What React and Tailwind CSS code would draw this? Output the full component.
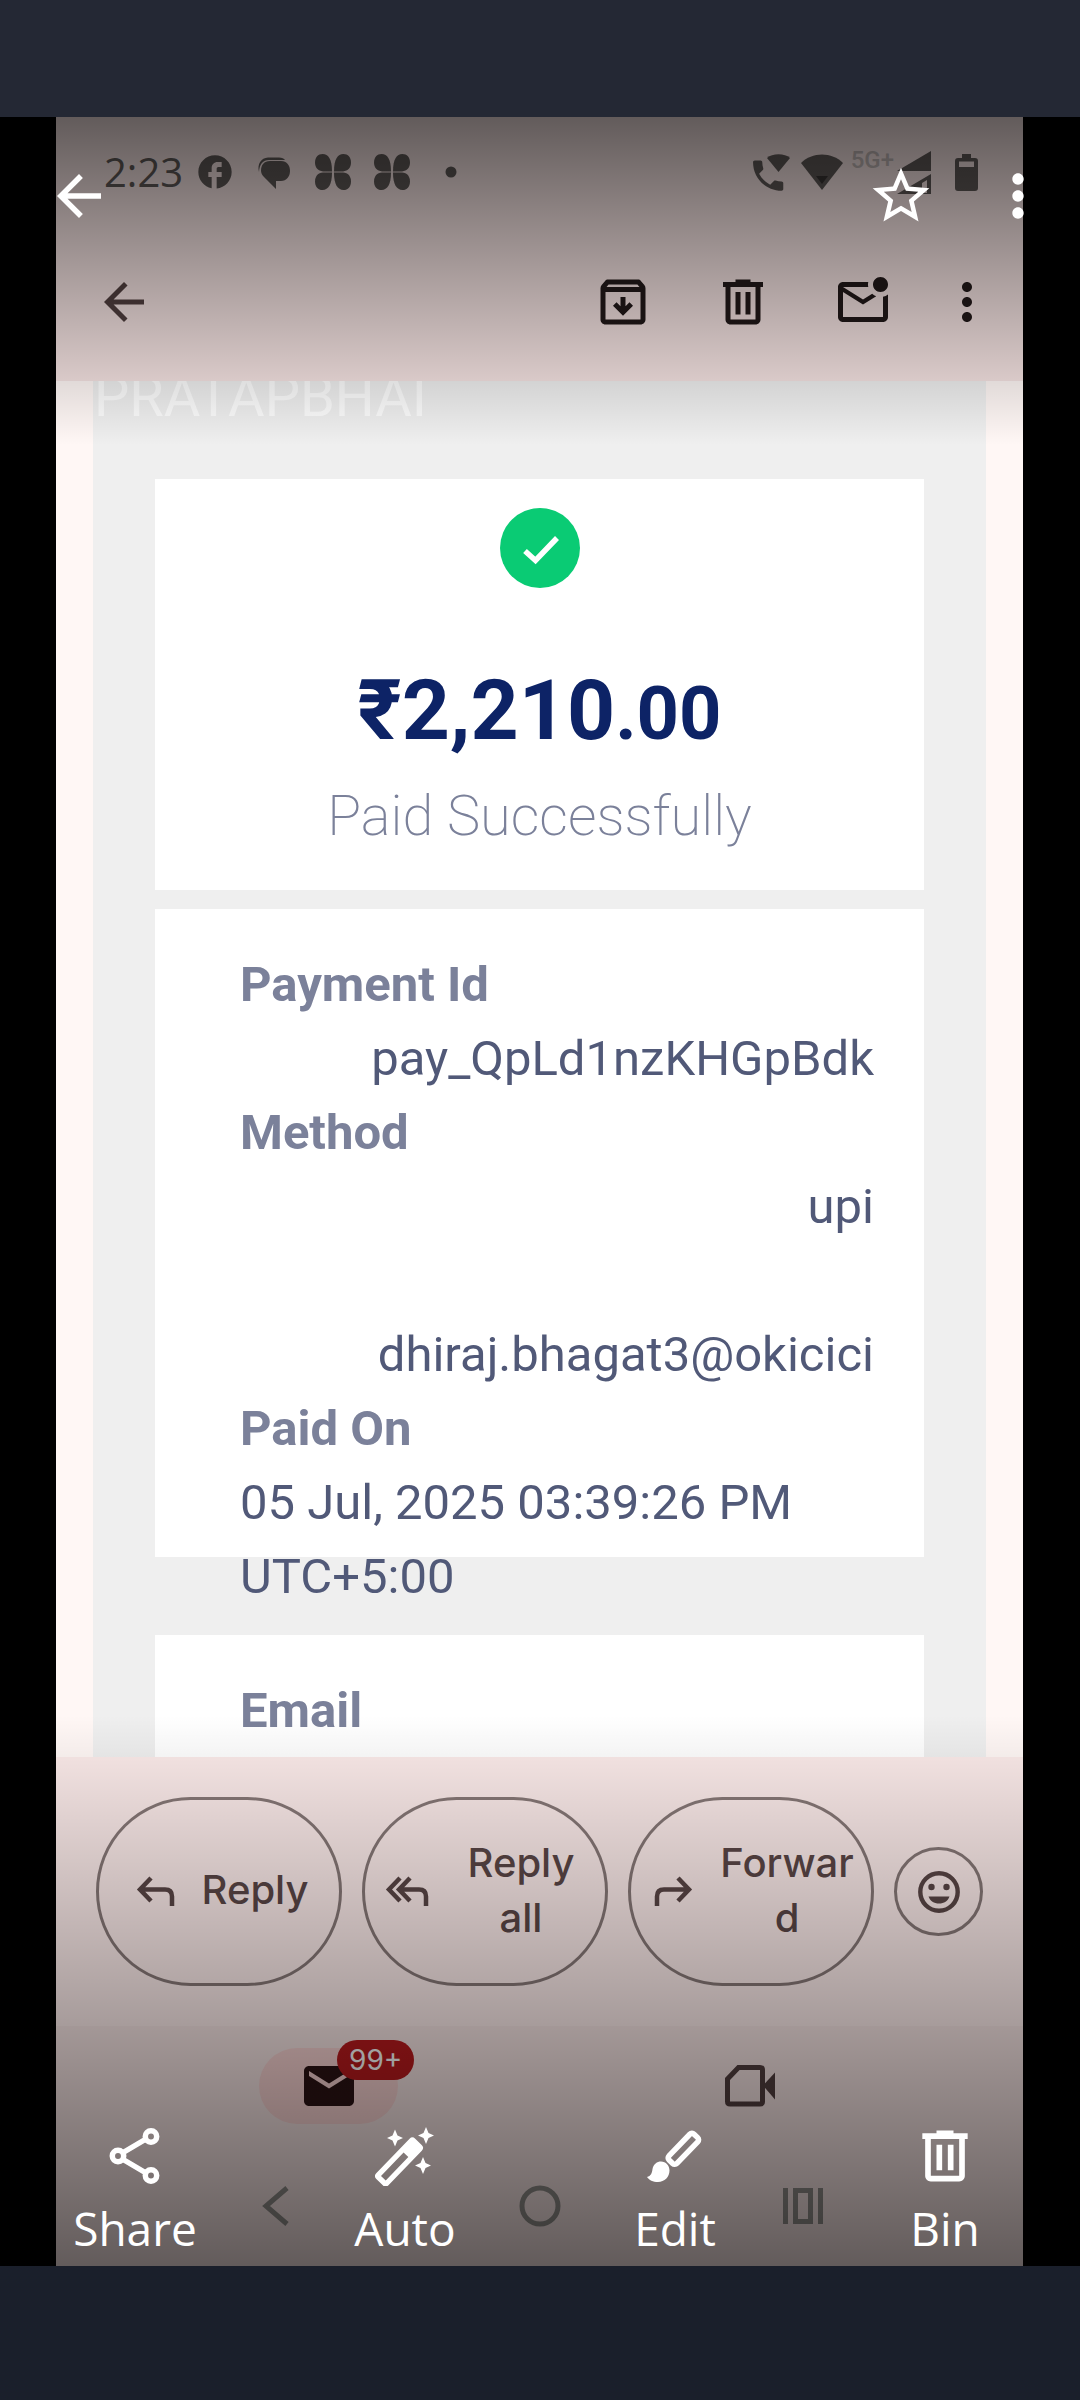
import React from "react";

const paths = {
  back: "M20 11H7.83l5.59-5.59L12 4l-8 8 8 8 1.41-1.41L7.83 13H20v-2z",
  archive:
    "M20.54 5.23l-1.39-1.68C18.88 3.21 18.47 3 18 3H6c-.47 0-.88.21-1.16.55L3.46 5.23C3.17 5.57 3 6.02 3 6.5V19c0 1.1.9 2 2 2h14c1.1 0 2-.9 2-2V6.5c0-.48-.17-.93-.46-1.27zM6.24 5h11.52l.83 1H5.42l.82-1zM5 19V8h14v11H5zm11-5.5l-4 4-4-4 1.41-1.41L11 13.67V10h2v3.67l1.59-1.59L16 13.5z",
  trash:
    "M7 21c-1.1 0-2-.9-2-2V6H4V4h5V3h6v1h5v2h-1v13c0 1.1-.9 2-2 2H7zM17 6H7v13h10V6zM9 17h2V8H9v9zm4 0h2V8h-2v9z",
  unread:
    "M22 8.98V18c0 1.1-.9 2-2 2H4c-1.1 0-2-.9-2-2V6c0-1.1.9-2 2-2h10.1c-.06.32-.1.66-.1 1s.04.68.1 1H4l8 5 3.67-2.29c.47.43 1.02.76 1.63.98L12 13 4 8v10h16V9.9c.74-.15 1.42-.48 2-.92zM16 5c0 1.66 1.34 3 3 3s3-1.34 3-3-1.34-3-3-3-3 1.34-3 3z",
  more: "M12 8c1.1 0 2-.9 2-2s-.9-2-2-2-2 .9-2 2 .9 2 2 2zm0 2c-1.1 0-2 .9-2 2s.9 2 2 2 2-.9 2-2-.9-2-2-2zm0 6c-1.1 0-2 .9-2 2s.9 2 2 2 2-.9 2-2-.9-2-2-2z",
  star: "M22 9.24l-7.19-.62L12 2 9.19 8.63 2 9.24l5.46 4.73L5.82 21 12 17.27 18.18 21l-1.63-7.03L22 9.24zM12 15.4l-3.76 2.27 1-4.28-3.32-2.88 4.38-.38L12 6.1l1.71 4.04 4.38.38-3.32 2.88 1 4.28L12 15.4z",
  mail: "M20 4H4c-1.1 0-1.99.9-1.99 2L2 18c0 1.1.9 2 2 2h16c1.1 0 2-.9 2-2V6c0-1.1-.9-2-2-2zm0 4l-8 5-8-5V6l8 5 8-5v2z",
  facebook:
    "M22 12c0-5.52-4.48-10-10-10S2 6.48 2 12c0 4.84 3.44 8.87 8 9.8V15H8v-3h2V9.5C10 7.57 11.57 6 13.5 6H16v3h-2c-.55 0-1 .45-1 1v2h3v3h-3v6.95c5.05-.5 9-4.76 9-9.95z",
};

function Icon({ name, className }) {
  return (
    <svg viewBox="0 0 24 24" fill="currentColor" className={className} aria-hidden="true">
      <path d={paths[name]} />
    </svg>
  );
}

function Clover() {
  const petal = "M17 17.4H8C3 17.4 0 13.4 0 8.6C0 3.4 3 0 7.6 0C13.4 0 17 5.4 17 17.4Z";
  return (
    <svg viewBox="-2 -2 40 40" fill="currentColor" className="size-10">
      <path d={petal} />
      <path d={petal} transform="matrix(-1 0 0 1 36 0)" />
      <path d={petal} transform="matrix(1 0 0 -1 0 36)" />
      <path d={petal} transform="matrix(-1 0 0 -1 36 36)" />
    </svg>
  );
}

function StatusBar() {
  return (
    <div className="flex h-[110px] items-center pl-12 pr-[35px] text-[#5f5957]">
      <span className="mr-3 font-['Open_Sans',sans-serif] text-[40px] leading-none">2:23</span>
      <div className="flex items-center gap-[19px]">
        <Icon name="facebook" className="size-10" />
        <svg viewBox="0 0 40 40" fill="currentColor" className="size-10">
          <path d="M16 9H27C33 9 36 13.500 36 19C36 24.500 32.500 29 27 29H22V37L10 25C8 23 7 21 7 18.500C7 13 10 9 16 9Z" />
          <path d="M5 20C3 12 7 6 14 5.500H25C28 5.500 30 6.500 31 8H15C9 8 5.500 12 5 20Z" />
        </svg>
        <Clover />
        <Clover />
        <svg viewBox="0 0 40 40" fill="currentColor" className="size-10">
          <circle cx="20" cy="20" r="5.500" />
        </svg>
      </div>
      <div className="ml-auto flex items-center gap-[7px]">
        <svg viewBox="0 0 44 44" fill="currentColor" className="size-11">
          <path
            transform="translate(-1 5.500) scale(1.680)"
            d="M20 15.500c-1.250 0-2.450-.2-3.570-.57-.35-.1-.74-.02-1.020.25l-2.200 2.200c-2.830-1.440-5.150-3.750-6.590-6.590l2.200-2.210c.28-.26.36-.65.25-1C8.700 6.450 8.500 5.250 8.500 4c0-.55-.45-1-1-1H4c-.55 0-1 .45-1 1 0 9.390 7.610 17 17 17 .55 0 1-.45 1-1v-3.500c0-.55-.45-1-1-1z"
          />
          <path d="M18 8C23 3 36 3 41 8L29.500 22Z" />
        </svg>
        <svg viewBox="0 0 44 44" fill="currentColor" className="size-11">
          <path d="M1 13C12 1.500 32 1.500 43 13L22 40Z" />
          <path d="M16 26H28L22 34Z" fill="#383433" />
        </svg>
        <span className="-mr-1 mb-6 font-[Roboto,sans-serif] text-[24px] font-medium leading-none text-[#c0b6b5]">5G+</span>
        <svg viewBox="0 0 36 44" fill="currentColor" className="h-11 w-9">
          <path d="M0 21L34 1V21Z" />
          <path d="M0 44L34 24V44Z M25 33V43H30V30Z" fillRule="evenodd" />
        </svg>
        <svg viewBox="0 0 44 44" fill="currentColor" className="ml-1 size-11">
          <path
            fillRule="evenodd"
            d="M18 4H27V8H31Q34 8 34 11V38Q34 41 31 41H14Q11 41 11 38V11Q11 8 14 8H18Z M15 11.500V17H30V11.500Z"
          />
        </svg>
      </div>
    </div>
  );
}

function Toolbar() {
  return (
    <div className="flex h-[154px] items-center pb-1 pl-[38px] pr-[26px] text-[#221919]">
      <button aria-label="Back" className="text-[#524040]">
        <Icon name="back" className="size-[60px]" />
      </button>
      <div className="ml-auto flex items-center gap-[60px]">
        <button aria-label="Archive"><Icon name="archive" className="size-[60px]" /></button>
        <button aria-label="Delete"><Icon name="trash" className="size-[60px]" /></button>
        <button aria-label="Mark as unread"><Icon name="unread" className="size-[60px]" /></button>
        <button aria-label="More" className="-ml-4"><Icon name="more" className="size-[60px]" /></button>
      </div>
    </div>
  );
}

const labelClass = "font-bold text-[#7b819a]";

function Receipt() {
  return (
    <article className="min-h-0 flex-1 overflow-hidden bg-[#fff7f5] px-[37px] font-[Roboto,sans-serif]">
      <div className="flow-root h-full bg-[#efefef]">
        <p className="-mt-[21px] mb-[45px] pl-px text-[56px] leading-[74px] text-[#fcfcfc]">PRATAPBHAI</p>
        <div className="space-y-[19px] px-[62px]">
          <section className="bg-white pb-[37px] pt-[29px] text-center">
            <svg viewBox="0 0 80 80" className="mx-auto size-20">
              <circle cx="40" cy="40" r="40" fill="#0acb74" />
              <path d="M25 43L35.500 52.500L57 30" fill="none" stroke="#fff" strokeWidth="5.500" />
            </svg>
            <h1 className="mt-[73px] text-[84px] font-bold leading-[100px] text-[#0d2366]">
              ₹2,210<span className="text-[74px] leading-none">.00</span>
            </h1>
            <p className="mt-[18px] text-[56px] font-extralight leading-[74px] text-[#7b819a]">Paid Successfully</p>
          </section>
          {/* fixed height, the timezone line runs past the bottom edge */}
          <section className="h-[648px] bg-white pl-[85px] pr-[50px] pt-[39px]">
            <dl className="text-[49px] leading-[74px] text-[#515978]">
              <dt className={labelClass}>Payment Id</dt>
              <dd className="text-right">pay_QpLd1nzKHGpBdk</dd>
              <dt className={labelClass}>Method</dt>
              <dd className="text-right">
                upi
                <br />
                <br />
                dhiraj.bhagat3@okicici
              </dd>
              <dt className={labelClass}>Paid On</dt>
              <dd>05 Jul, 2025 03:39:26 PM UTC+5:00</dd>
            </dl>
          </section>
          <section className="mt-[78px] h-[648px] bg-white pl-[85px] pr-[50px] pt-[39px]">
            <h2 className="text-[49px] font-bold leading-[74px] text-[#7b819a]">Email</h2>
          </section>
        </div>
      </div>
    </article>
  );
}

function ReplyButton({ label, children }) {
  return (
    <button className="flex h-[189px] min-w-0 flex-1 items-center justify-center gap-3 rounded-full border-[3px] border-[#877877] px-3 pb-1">
      <svg viewBox="0 0 60 60" fill="none" stroke="currentColor" strokeWidth="4.500" className="size-[60px] shrink-0">
        {children}
      </svg>
      <span className="min-w-0 text-center text-[40px] font-medium leading-[55px] wrap-anywhere">{label}</span>
    </button>
  );
}

function ReplyBar() {
  return (
    <div className="flex items-center gap-5 bg-[#fcebea] px-10 py-10 font-[Inter,sans-serif] text-[#5a4646]">
      <ReplyButton label="Reply">
        <path d="M21 18L10 29.500L21 41M11 29.500H35Q42 29.500 42 36.500V46" />
      </ReplyButton>
      <ReplyButton label="Reply all">
        <path d="M23 18L12 29.500L23 41M33 18L22 29.500L33 41M23 29.500H42Q49 29.500 49 36.500V46" />
      </ReplyButton>
      <ReplyButton label="Forward">
        <path d="M35 18L46 29.500L35 41M45 29.500H21Q14 29.500 14 36.500V46" />
      </ReplyButton>
      <button
        aria-label="Add reaction"
        className="flex size-[89px] shrink-0 items-center justify-center rounded-full border-[3px] border-[#877877]"
      >
        <svg viewBox="0 0 42 42" fill="currentColor" className="size-[42px]">
          <circle cx="21" cy="21" r="18.700" fill="none" stroke="currentColor" strokeWidth="4.400" />
          <circle cx="13.500" cy="16" r="3.200" />
          <circle cx="28.500" cy="16" r="3.200" />
          <path d="M10.500 25.500H31.500C30 30 26 32.500 21 32.500S12 30 10.500 25.500Z" />
        </svg>
      </button>
    </div>
  );
}

function BottomNav() {
  return (
    <nav className="h-[240px] bg-[#f7e5e4]">
      <div className="grid h-[120px] grid-cols-2 items-center justify-items-center px-[62px] text-[#523f3f]">
        <button aria-label="Mail" className="relative flex h-[76px] w-[139px] items-center justify-center rounded-full bg-[#f9d3d2] text-[#2c1314]">
          <Icon name="mail" className="size-[60px]" />
          <span className="absolute -right-4 -top-2 flex h-10 w-[77px] items-center justify-center rounded-full bg-[#ba1a1d] font-[Inter,sans-serif] text-[28px] leading-none text-white">
            99+
          </span>
        </button>
        <button aria-label="Meet">
          <svg viewBox="0 0 50 42" fill="currentColor" className="h-[42px] w-[50px]">
            <path d="M2.500 14L13.500 2.500H35Q37.500 2.500 37.500 5V36.500Q37.500 39 35 39H5Q2.500 39 2.500 36.500Z" fill="none" stroke="currentColor" strokeWidth="5" />
            <path d="M38 20.500L50 7.500V34.500Z" />
          </svg>
        </button>
      </div>
      <div className="flex h-[120px] items-center justify-between px-[199px] text-[#918e8a]">
        <svg viewBox="0 0 42 42" fill="none" stroke="currentColor" strokeWidth="5" className="size-[42px]">
          <path d="M32 3L11 21L32 39" />
        </svg>
        <svg viewBox="0 0 42 42" fill="none" stroke="currentColor" strokeWidth="5" className="size-[42px]">
          <circle cx="21" cy="21" r="18" />
        </svg>
        <svg viewBox="0 0 42 42" fill="none" stroke="currentColor" strokeWidth="5" className="size-[42px]">
          <path d="M3.500 3V39M38.500 3V39M13.500 5.500H28.500V36.500H13.500Z" />
        </svg>
      </div>
    </nav>
  );
}

function ViewerAction({ label, children }) {
  return (
    <button className="flex flex-col items-center gap-3">
      {children}
      <span className="text-[46px] leading-[60px]">{label}</span>
    </button>
  );
}

function ViewerControls() {
  return (
    <>
      <div className="absolute inset-x-0 top-0 flex h-[157px] items-center pl-[46px] pr-7 text-white">
        <button aria-label="Close photo"><Icon name="back" className="size-[66px]" /></button>
        <button aria-label="Favourite" className="ml-auto"><Icon name="star" className="size-[68px]" /></button>
        <button aria-label="More options" className="ml-[49px]"><Icon name="more" className="size-[68px]" /></button>
      </div>
      <div className="absolute inset-x-0 bottom-0 grid grid-cols-4 pb-2 font-['Open_Sans',sans-serif] text-white">
        <ViewerAction label="Share">
          <svg viewBox="0 0 60 60" fill="none" stroke="currentColor" strokeWidth="5.500" className="size-[60px]">
            <path d="M19 26L41 13M19 34L41 47" />
            <circle cx="13" cy="30" r="5.700" />
            <circle cx="46" cy="10.500" r="5.700" />
            <circle cx="46" cy="49.500" r="5.700" />
          </svg>
        </ViewerAction>
        <ViewerAction label="Auto">
          <svg viewBox="0 0 60 60" fill="currentColor" className="size-[60px]">
            <g transform="translate(24 36) rotate(-46)">
              <path
                fillRule="evenodd"
                d="M-24 -8.500H24Q28 -8.500 28 -4.500V4.500Q28 8.500 24 8.500H-24Q-28 8.500 -28 4.500V-4.500Q-28 -8.500 -24 -8.500Z M-22.500 -3.300V3.300H10V-3.300Z"
              />
            </g>
            <path d="M20 3.500L22.500 9.500L28 12L22.500 14.500L20 20.500L17.500 14.500L12 12L17.500 9.500Z" />
            <path d="M51 1L53.500 7L59 9.500L53.500 12L51 18L48.500 12L43 9.500L48.500 7Z" />
            <path d="M48 31L50.500 37L56 39.500L50.500 42L48 48L45.500 42L40 39.500L45.500 37Z" />
          </svg>
        </ViewerAction>
        <ViewerAction label="Edit">
          <svg viewBox="0 0 60 60" fill="currentColor" className="size-[60px]">
            <rect x="-18" y="-5" width="36" height="11" rx="3" transform="translate(38 22.500) rotate(-46)" fill="none" stroke="currentColor" strokeWidth="5.500" />
            <path d="M2 51C6 50 7 47 7.500 43C8.500 38 12 35.500 16 35.500C21 35.500 24.500 39.500 24.500 44.500C24.500 51 19.500 56 13 56C8 56 4 54 2 51Z" />
          </svg>
        </ViewerAction>
        <ViewerAction label="Bin">
          <Icon name="trash" className="size-[68px] -my-1" />
        </ViewerAction>
      </div>
    </>
  );
}

export default function App() {
  return (
    <div className="flex h-screen flex-col bg-black">
      <div className="h-[117px] shrink-0 bg-[#242834]" />
      <main className="relative min-h-0 flex-1 pl-14 pr-[57px]">
        <div className="relative flex h-full flex-col overflow-hidden">
          <header className="bg-[#f6e4e3]">
            <StatusBar />
            <Toolbar />
          </header>
          <Receipt />
          <ReplyBar />
          <BottomNav />
          <div className="pointer-events-none absolute inset-x-0 top-0 h-[328px] bg-linear-to-b from-black/60 to-transparent" />
          <div className="pointer-events-none absolute inset-x-0 bottom-0 h-[551px] bg-linear-to-t from-black/60 to-transparent" />
        </div>
        <ViewerControls />
      </main>
      <div className="h-[134px] shrink-0 bg-[#1a1f2b]" />
    </div>
  );
}
